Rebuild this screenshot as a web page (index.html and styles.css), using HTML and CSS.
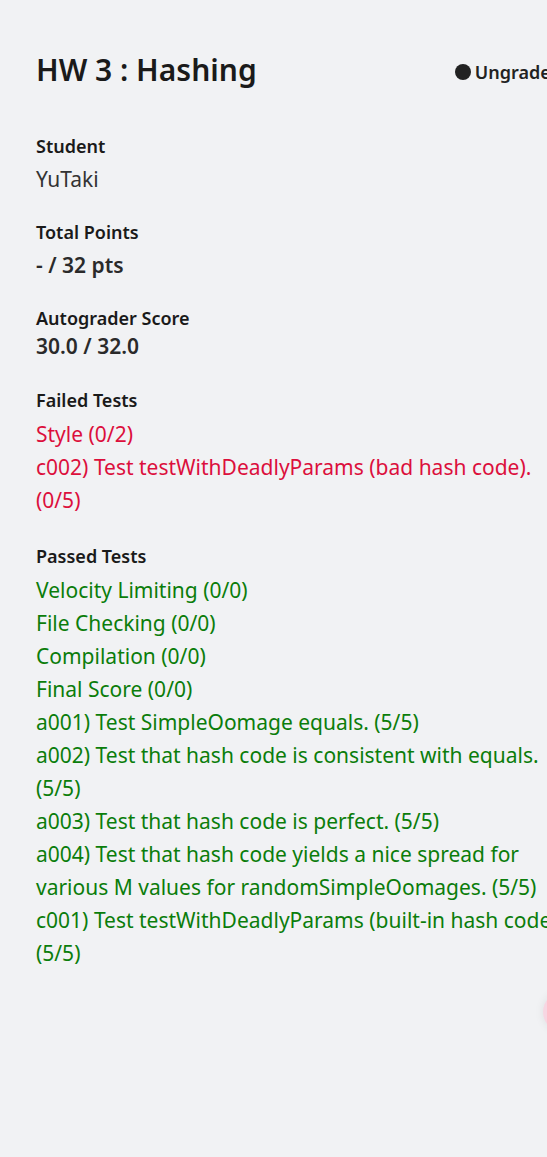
FILE: index.html
```html
<!DOCTYPE html>
<html lang="en">
<head>
    <meta charset="UTF-8" />
    <meta name="viewport" content="width=device-width, initial-scale=1.0"/>
    <title>HW 3 : Hashing</title>
    <link rel="stylesheet" href="styles.css">
</head>
<body>
<div class="submission">

    <div class="submission-header">
        <h1 class="submission-title">HW 3 : Hashing</h1>
        <div class="status"><span class="status-dot"></span>Ungraded</div>
    </div>

    <div class="field">
        <div class="field-label">Student</div>
        <div class="field-value">YuTaki</div>
    </div>

    <div class="field">
        <div class="field-label">Total Points</div>
        <div class="field-value strong">- / 32 pts</div>
    </div>

    <div class="field field-tight">
        <div class="field-label">Autograder Score</div>
        <div class="field-value strong">30.0 / 32.0</div>
    </div>

    <div class="field field-list">
        <div class="field-label">Failed Tests</div>
        <ul class="tests tests-failed">
            <li>Style (0/2)</li>
            <li>c002) Test testWithDeadlyParams (bad hash code). (0/5)</li>
        </ul>
    </div>

    <div class="field field-list">
        <div class="field-label">Passed Tests</div>
        <ul class="tests tests-passed">
            <li>Velocity Limiting (0/0)</li>
            <li>File Checking (0/0)</li>
            <li>Compilation (0/0)</li>
            <li>Final Score (0/0)</li>
            <li>a001) Test SimpleOomage equals. (5/5)</li>
            <li>a002) Test that hash code is consistent with equals. (5/5)</li>
            <li>a003) Test that hash code is perfect. (5/5)</li>
            <li>a004) Test that hash code yields a nice spread for various M values for randomSimpleOomages. (5/5)</li>
            <li>c001) Test testWithDeadlyParams (built-in hash code). (5/5)</li>
        </ul>
    </div>
</div>

<div class="help-bubble"></div>
</body>
</html>
```

FILE: styles.css
```css
html, body {
    overflow: hidden;
}

body {
    margin: 0;
    background: #f1f2f4;
    font-family: "Noto Sans", "Open Sans", sans-serif;
    color: #222;
    min-height: 100vh;
}

.submission {
    width: 542px;
    padding: 39px 0 0 36px;
}

.submission-header {
    display: flex;
    justify-content: space-between;
    align-items: center;
    padding-right: 16px;
    margin-bottom: 32px;
}

.submission-title {
    margin: 0;
    font-size: 30px;
    font-weight: 600;
    line-height: 62px;
    color: #1a1a1a;
}

.status {
    display: flex;
    align-items: center;
    gap: 4px;
    font-size: 18px;
    font-weight: 600;
    color: #222;
    white-space: nowrap;
    margin-top: 4px;
}

.status-dot {
    width: 16px;
    height: 16px;
    border-radius: 50%;
    background: #222;
}

.field {
    margin-bottom: 20px;
}

.field-label {
    font-size: 18px;
    font-weight: 600;
    line-height: 26px;
    color: #1a1a1a;
}

.field-value {
    font-size: 21px;
    line-height: 40px;
    color: #333;
}

.field-value.strong {
    font-weight: 600;
    color: #2a2a2a;
}

.field-tight {
    margin-bottom: 26px;
}

.field-tight .field-value {
    line-height: 30px;
}

.field-list {
    margin-bottom: 26px;
}

.tests {
    list-style: none;
    margin: 0;
    padding: 5px 0 0;
    font-size: 21px;
    line-height: 33px;
}

.tests-failed {
    color: #dc0f3c;
}

.tests-passed {
    color: #0b7d0b;
}

.help-bubble {
    position: fixed;
    right: -36px;
    top: 992px;
    width: 40px;
    height: 40px;
    border-radius: 50%;
    background: #f7d6e2;
    box-shadow: 0 0 10px rgba(0, 0, 0, 0.08);
}
```
